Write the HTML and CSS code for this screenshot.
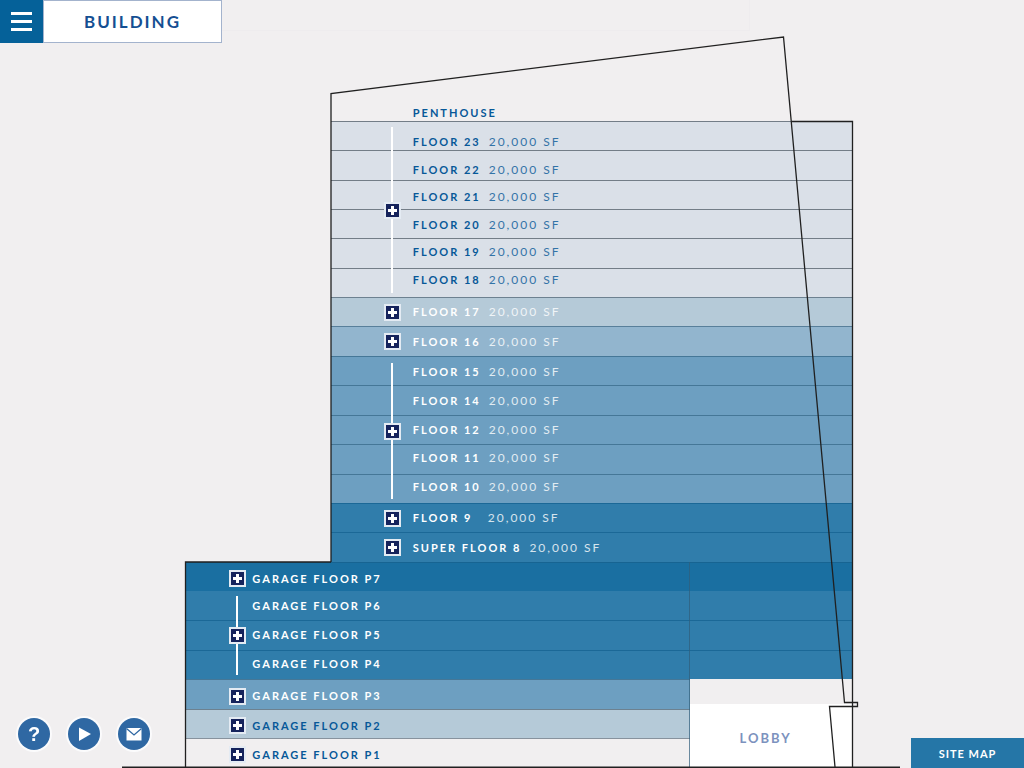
FILE: index.html
```html
<!DOCTYPE html>
<html lang="en">
<head>
<meta charset="utf-8">
<title>Building</title>
<meta name="viewport" content="width=device-width, initial-scale=1">
<link rel="stylesheet" href="styles.css">
</head>
<body>
<header class="topbar">
  <button class="menu" type="button" aria-label="Menu"><span></span><span></span><span></span></button>
  <h1 class="title">BUILDING</h1>
  <div class="topbar-rule"></div>
</header>

<main class="stage">
  <h2 class="penthouse">PENTHOUSE</h2>

  <div class="tower">
    <section class="group six pale">
      <div class="rail"><button class="plus" type="button" aria-label="Expand floors 18 to 23"></button></div>
      <ul class="floors">
        <li><b>FLOOR 23</b><span>20,000 SF</span></li>
        <li><b>FLOOR 22</b><span>20,000 SF</span></li>
        <li><b>FLOOR 21</b><span>20,000 SF</span></li>
        <li><b>FLOOR 20</b><span>20,000 SF</span></li>
        <li><b>FLOOR 19</b><span>20,000 SF</span></li>
        <li><b>FLOOR 18</b><span>20,000 SF</span></li>
      </ul>
    </section>
    <section class="group light">
      <div class="mark"><button class="plus" type="button" aria-label="Expand floor 17"></button></div>
      <ul class="floors"><li><b>FLOOR 17</b><span>20,000 SF</span></li></ul>
    </section>
    <section class="group tall soft">
      <div class="mark"><button class="plus" type="button" aria-label="Expand floor 16"></button></div>
      <ul class="floors"><li><b>FLOOR 16</b><span>20,000 SF</span></li></ul>
    </section>
    <section class="group five medium">
      <div class="rail"><button class="plus" type="button" aria-label="Expand floors 10 to 15"></button></div>
      <ul class="floors">
        <li><b>FLOOR 15</b><span>20,000 SF</span></li>
        <li><b>FLOOR 14</b><span>20,000 SF</span></li>
        <li><b>FLOOR 12</b><span>20,000 SF</span></li>
        <li><b>FLOOR 11</b><span>20,000 SF</span></li>
        <li><b>FLOOR 10</b><span>20,000 SF</span></li>
      </ul>
    </section>
    <section class="group strong">
      <div class="mark"><button class="plus" type="button" aria-label="Expand floor 9"></button></div>
      <ul class="floors"><li><b>FLOOR 9</b><span>20,000 SF</span></li></ul>
    </section>
    <section class="group tall strong">
      <div class="mark"><button class="plus" type="button" aria-label="Expand super floor 8"></button></div>
      <ul class="floors"><li><b>SUPER FLOOR 8</b><span>20,000 SF</span></li></ul>
    </section>
  </div>

  <div class="garage">
    <section class="group deep">
      <div class="mark"><button class="plus" type="button" aria-label="Expand garage floor P7"></button></div>
      <ul class="floors"><li><b>GARAGE FLOOR P7</b></li></ul>
    </section>
    <section class="group three strong">
      <div class="rail"><button class="plus" type="button" aria-label="Expand garage floors P4 to P6"></button></div>
      <ul class="floors">
        <li><b>GARAGE FLOOR P6</b></li>
        <li><b>GARAGE FLOOR P5</b></li>
        <li><b>GARAGE FLOOR P4</b></li>
      </ul>
    </section>
  </div>

  <div class="ground">
    <div class="lower">
      <section class="group tall medium">
        <div class="mark"><button class="plus" type="button" aria-label="Expand garage floor P3"></button></div>
        <ul class="floors"><li><b>GARAGE FLOOR P3</b></li></ul>
      </section>
      <section class="group light blue-text">
        <div class="mark"><button class="plus" type="button" aria-label="Expand garage floor P2"></button></div>
        <ul class="floors"><li><b>GARAGE FLOOR P2</b></li></ul>
      </section>
      <section class="group blank blue-text">
        <div class="mark"><button class="plus" type="button" aria-label="Expand garage floor P1"></button></div>
        <ul class="floors"><li><b>GARAGE FLOOR P1</b></li></ul>
      </section>
    </div>
    <div class="lobby">LOBBY</div>
  </div>

  <svg class="outline" viewBox="0 43 1024 725" preserveAspectRatio="none" aria-hidden="true">
    <path class="faint" d="M689.5 562V767"/>
    <path d="M331 562V93.500L783.500 37L844.500 702.500H857.500V706.500H829.500L835 767"/>
    <path d="M791.500 121.500H852.500V767"/>
    <path d="M331 562H185.500V767"/>
    <path class="base" d="M122 767.500H900"/>
  </svg>
</main>

<nav class="tools" aria-label="Tools">
  <button class="round" type="button" aria-label="Help">?</button>
  <button class="round" type="button" aria-label="Play"><svg width="32" height="32" viewBox="0 0 32 32"><path d="M11 9.500L23 16L11 23Z" fill="#fff"/></svg></button>
  <button class="round" type="button" aria-label="Mail"><svg width="32" height="32" viewBox="0 0 32 32"><path d="M8.500 10H23.500V22.500H8.500Z" fill="#fff"/><path d="M8.500 10.500L16 17L23.500 10.500" fill="none" stroke="#2f68a3" stroke-width="1.300"/></svg></button>
</nav>
<a class="sitemap" href="#">SITE MAP</a>
</body>
</html>
```
FILE: styles.css
```css
* { box-sizing: border-box; }

body {
  margin: 0;
  min-height: 100vh;
  background: #f1eff0;
  color: #075898;
  font-family: Lato, "Open Sans", sans-serif;
  font-size: 11px;
  line-height: 16px;
  letter-spacing: 2px;
  overflow-x: hidden;
}

button { padding: 0; border: 0; cursor: pointer; }

/* top bar */
.topbar { display: flex; height: 43px; }
.menu {
  width: 43px;
  background: #056199;
  display: flex;
  flex-direction: column;
  align-items: center;
  justify-content: center;
  gap: 5px;
}
.menu span { width: 21px; height: 3px; background: #fff; }
.title {
  margin: 0;
  width: 179px;
  display: flex;
  align-items: center;
  justify-content: center;
  background: #fff;
  border: 1px solid #a3b3cd;
  color: #154f92;
  font-size: 17px;
  font-weight: 700;
}
.topbar-rule {
  width: 51.6%;
  height: 31px;
  border: solid #eeecee;
  border-width: 0 1px 1px 0;
}

/* building */
.stage { position: relative; }
.penthouse {
  margin: 0 0 0 32.300%;
  padding: 62px 0 0 82px;
  font-size: 11px;
  font-weight: 700;
}
.tower { margin: 0 16.700% 0 32.300%; }
.garage { margin: 0 16.700% 0 18.100%; }
.ground { margin: 0 16.700% 0 18.100%; display: flex; }
.lower { width: 75.600%; }

.group {
  display: flex;
  gap: 12px;
  height: 29px;
  padding-left: 53px;
  border-top: 1px solid var(--line);
  background-color: var(--fill);
  color: #fff;
}
.tall { height: 30px; }
.garage .group, .lower .group { padding-left: 44px; gap: 6px; }
.garage .mark, .lower .mark, .garage .deep .floors, .lower .floors { padding-top: 3px; }

.pale { --fill: #dae0e8; --line: #737d87; color: #075898; }
.light { --fill: #b5cad8; --line: #6d8190; }
.soft { --fill: #92b5ce; --line: #587f9a; }
.medium { --fill: #6d9fc1; --line: #457797; }
.strong { --fill: #307dab; --line: #1b6897; }
.deep { --fill: #1a6fa1; --line: #176492; }
.blank { --fill: transparent; --line: #87929d; }
.group.pale, .group.blue-text { color: #075898; }

/* several floors in one group: a line at the top of each storey */
.six, .five, .three {
  background-image: repeating-linear-gradient(var(--line) 0 1px, transparent 1px calc(100% / var(--count)));
  background-origin: border-box;
}
.six { --count: 6; height: 176px; padding-top: 5px; padding-bottom: 4px; }
.five { --count: 5; height: 147px; padding-top: 6px; padding-bottom: 4px; }
.three { --count: 3; height: 88px; padding-top: 4px; padding-bottom: 4px; }
.three { border-top-color: var(--fill); }

.mark, .rail { flex: none; width: 17px; display: flex; align-items: center; justify-content: center; }
.rail { background: linear-gradient(#fff, #fff) 7px 0 / 2px 100% no-repeat; }

.plus {
  width: 17px;
  height: 17px;
  border: 2px solid #e4ebf3;
  background:
    linear-gradient(#fff, #fff) center / 9px 3px no-repeat,
    linear-gradient(#fff, #fff) center / 3px 9px no-repeat,
    #15235c;
}

.floors {
  margin: 0;
  padding: 0;
  list-style: none;
  display: flex;
  flex-direction: column;
  justify-content: center;
}
.six .floors, .five .floors, .three .floors { justify-content: space-between; }
.six .floors { padding: 7px 0 5px; }
.five .floors { padding: 1px 0 4px; }
.three .floors { padding: 2px 0 3px; }
.floors li { display: flex; align-items: baseline; gap: 8px; white-space: nowrap; }
.floors b { min-width: 67px; font-weight: 700; }
.floors span { font-size: 12px; font-weight: 400; opacity: .8; }

.lobby {
  flex: 1;
  margin-top: 25px;
  padding: 5px 12px 0 0;
  display: flex;
  align-items: center;
  justify-content: center;
  background: #fff;
  color: #7c92be;
  font-size: 13px;
  font-weight: 700;
}

.outline {
  position: absolute;
  inset: 0;
  width: 100%;
  height: 725px;
  overflow: visible;
  pointer-events: none;
}
.outline path { fill: none; stroke: #202020; stroke-width: 1.300; vector-effect: non-scaling-stroke; }
.outline .faint { stroke: #315f7c; stroke-width: 1; opacity: .7; }
.outline .base { stroke-width: 2; }

/* floating controls */
.tools { position: fixed; left: 18px; bottom: 18px; display: flex; gap: 18px; }
.round {
  width: 32px;
  height: 32px;
  display: flex;
  align-items: center;
  justify-content: center;
  border-radius: 50%;
  background: #2f68a3;
  box-shadow: 0 0 0 2px #fbfbfc;
  color: #fff;
  font: 700 20px/32px "Liberation Sans", sans-serif;
}
.round svg { flex: none; }
.sitemap {
  position: fixed;
  right: 0;
  bottom: 0;
  width: 113px;
  height: 30px;
  line-height: 32px;
  text-align: center;
  background: #2576a7;
  color: #fff;
  font-weight: 700;
  letter-spacing: 1px;
  text-decoration: none;
}
```
